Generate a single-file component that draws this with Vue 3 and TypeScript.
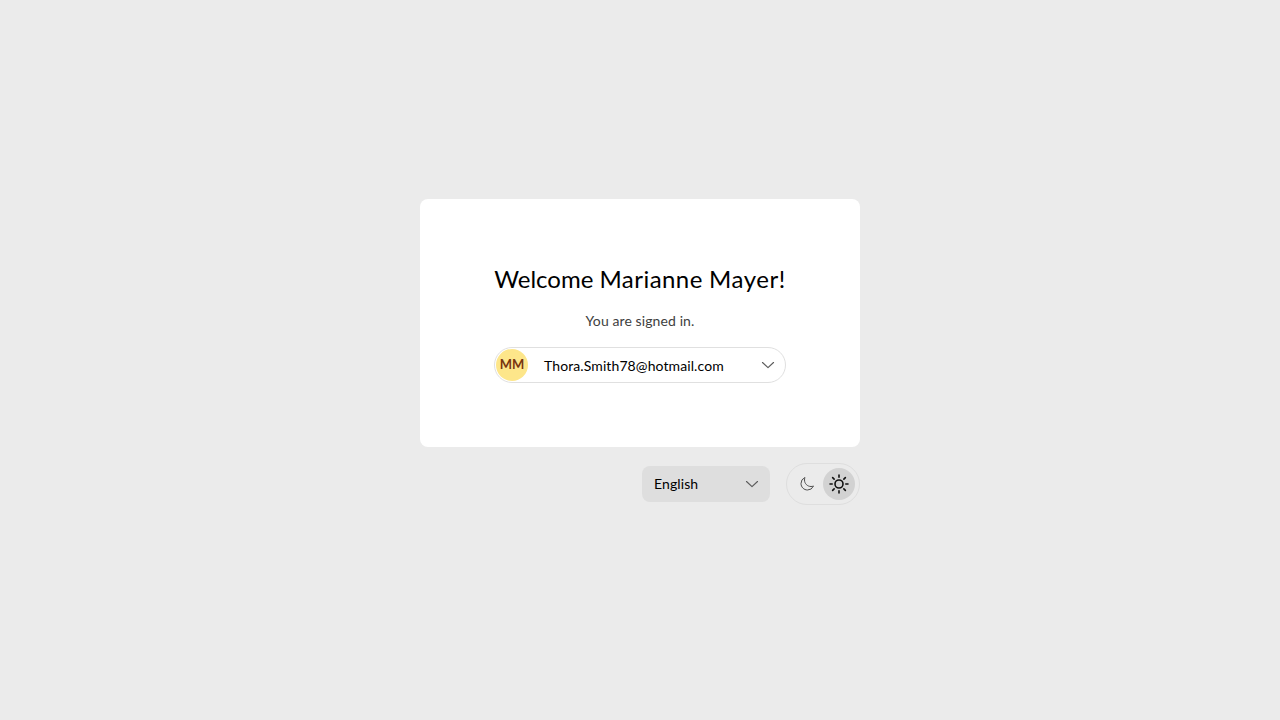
<script setup lang="ts">
import { ref } from 'vue'

const firstName = ref<string>('Marianne')
const lastName = ref<string>('Mayer')
const initials = ref<string>('MM')
const login = ref<string>('Thora.Smith78@hotmail.com')
const language = ref<string>('English')
const theme = ref<'light' | 'dark'>('light')
</script>

<template>
  <main class="page">
    <div class="column">
      <section class="card">
        <div class="content">
          <h1>Welcome <span class="first">{{ firstName }}</span> <span class="last">{{ lastName }}!</span></h1>
          <p>You are signed in.</p>
          <button class="account" type="button">
            <span class="avatar">{{ initials }}</span>
            <span class="login">{{ login }}</span>
            <svg class="chevron" viewBox="0 0 16 16"><path d="M2.5 5.5 8 10.7l5.5-5.2" /></svg>
          </button>
        </div>
      </section>
      <footer class="footer">
        <button class="language" type="button">
          <span>{{ language }}</span>
          <svg class="chevron" viewBox="0 0 16 16"><path d="M2.5 5.5 8 10.7l5.5-5.2" /></svg>
        </button>
        <div class="themes">
          <button class="theme" :class="{ active: theme === 'dark' }" type="button" aria-label="Dark" @click="theme = 'dark'">
            <svg class="moon" viewBox="0 0 24 24">
              <path d="M21.752 15.002A9.718 9.718 0 0118 15.75c-5.385 0-9.75-4.365-9.75-9.75 0-1.33.266-2.597.748-3.752A9.753 9.753 0 003 11.25C3 16.635 7.365 21 12.75 21a9.753 9.753 0 009.002-5.998z" />
            </svg>
          </button>
          <button class="theme" :class="{ active: theme === 'light' }" type="button" aria-label="Light" @click="theme = 'light'">
            <svg class="sun" viewBox="0 0 24 24">
              <circle cx="12" cy="12" r="4" />
              <path d="M12 3v2.2M12 18.8V21M3 12h2.2M18.8 12H21M5.64 5.64l1.5 1.5M16.86 16.86l1.5 1.5M5.64 18.36l1.5-1.5M16.86 7.14l1.5-1.5" />
            </svg>
          </button>
        </div>
      </footer>
    </div>
  </main>
</template>

<style>
body {
  background: #ebebeb;
}
</style>

<style scoped>
.page {
  box-sizing: border-box;
  min-height: 100vh;
  display: flex;
  justify-content: center;
  align-items: center;
  padding-bottom: 16px;
  font-family: Lato, sans-serif;
  font-size: 14px;
  line-height: 20px;
  letter-spacing: 0.1px;
  color: #000;
}
.column {
  width: 440px;
}
.card {
  display: flex;
  justify-content: center;
  box-sizing: border-box;
  height: 248px;
  padding-top: 64px;
  border-radius: 8px;
  background: #fff;
}
.content {
  width: 292px;
  display: flex;
  flex-direction: column;
  align-items: center;
}
h1 {
  margin: 0;
  font-size: 24px;
  line-height: 32px;
  font-weight: 400;
  letter-spacing: 0;
  white-space: nowrap;
}
.first {
  letter-spacing: 0.45px;
}
.last {
  letter-spacing: 0.55px;
}
p {
  margin: 16px 0;
  color: #404040;
}
button {
  box-sizing: border-box;
  border: 0;
  padding: 0;
  font: inherit;
  letter-spacing: inherit;
  color: inherit;
  background: transparent;
  cursor: pointer;
}
.account {
  width: 100%;
  height: 36px;
  display: flex;
  align-items: center;
  padding: 0 9px 0 1px;
  border: 1px solid #e0e0e0;
  border-radius: 18px;
}
.avatar {
  width: 32px;
  height: 32px;
  line-height: 30px;
  border-radius: 50%;
  background: #fde68a;
  color: #78350f;
  font-size: 13px;
  font-weight: 700;
  letter-spacing: 0;
  text-align: center;
}
.login {
  margin: 2px auto 0 16px;
}
.chevron {
  width: 16px;
  height: 16px;
  fill: none;
  stroke: #5c5c5c;
  stroke-width: 1.15;
  stroke-linecap: round;
  stroke-linejoin: round;
}
.footer {
  display: flex;
  justify-content: flex-end;
  align-items: center;
  gap: 16px;
  margin-top: 16px;
}
.language {
  width: 128px;
  height: 36px;
  padding: 0 10px 0 12px;
  display: flex;
  justify-content: space-between;
  align-items: center;
  border-radius: 8px;
  background: #dedede;
}
.themes {
  box-sizing: border-box;
  width: 74px;
  height: 42px;
  display: flex;
  padding: 4px;
  border: 1px solid #dedede;
  border-radius: 21px;
}
.theme {
  width: 32px;
  height: 32px;
  display: flex;
  align-items: center;
  justify-content: center;
  border-radius: 50%;
}
.active {
  background: #d2d2d2;
}
.moon {
  width: 16px;
  height: 16px;
  fill: none;
  stroke: #444;
  stroke-width: 1.4;
}
.sun {
  width: 24px;
  height: 24px;
  fill: none;
  stroke: #111;
  stroke-width: 1.6;
  stroke-linecap: round;
}
</style>
